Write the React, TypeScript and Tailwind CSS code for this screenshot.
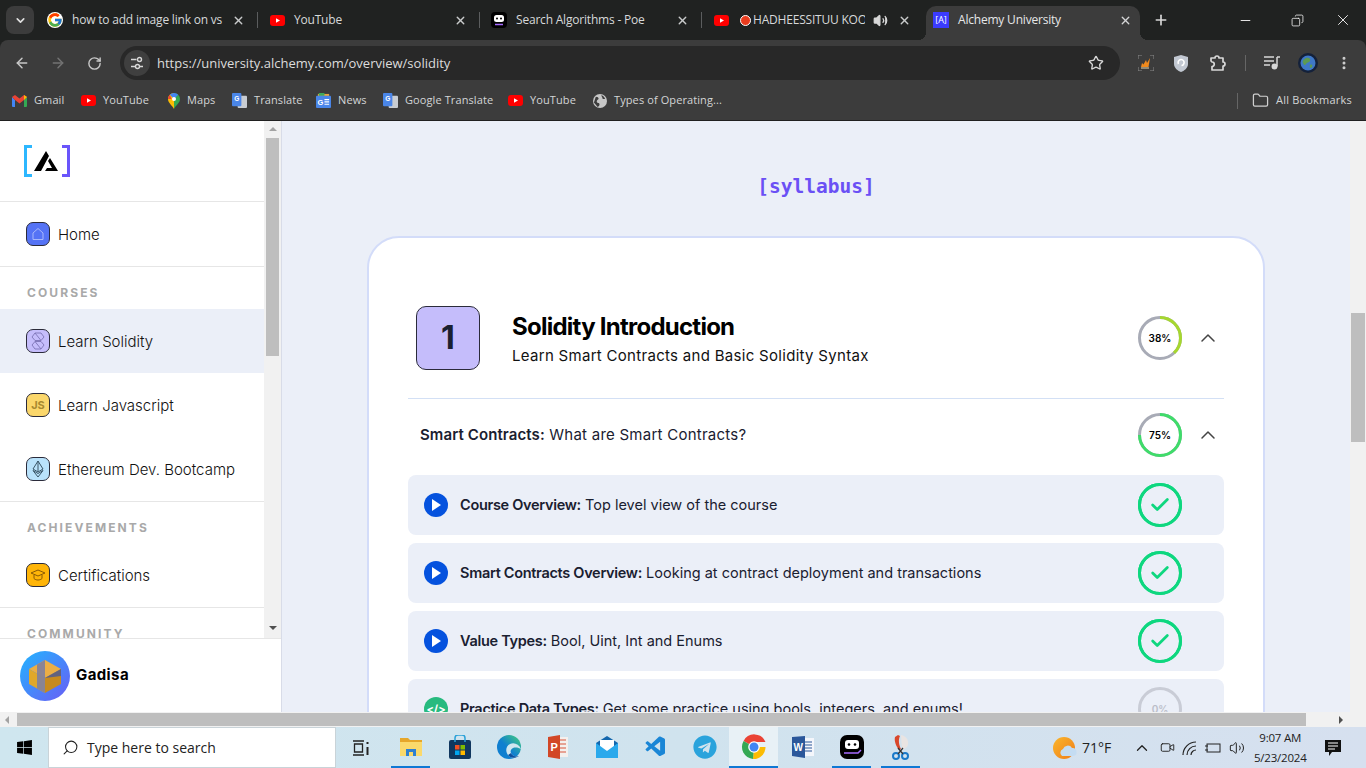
import type { ReactNode } from "react";
import {
  ArrowLeft,
  ArrowRight,
  Check,
  ChevronDown,
  ChevronUp,
  Copy,
  Folder,
  Minus,
  MoreVertical,
  Plus,
  RotateCw,
  Search,
  Star,
  Video,
  Volume2,
  X,
} from "lucide-react";
import { FcGoogle } from "react-icons/fc";
import { FaTelegram, FaWindows } from "react-icons/fa";
import { VscVscode } from "react-icons/vsc";

const Yt = () => (
  <svg width="15" height="15" viewBox="0 0 15 15" className="shrink-0">
    <rect x="0" y="2" width="15" height="11" rx="3" fill="#f00" />
    <path d="M6 5.200 10 7.500 6 9.800z" fill="#fff" />
  </svg>
);

const Poe = () => (
  <svg width="16" height="16" viewBox="0 0 16 16" className="shrink-0">
    <rect width="16" height="16" rx="4" fill="#000" />
    <rect x="3" y="3" width="10" height="7" rx="2.500" fill="#fff" />
    <circle cx="6" cy="6.500" r="1" fill="#000" />
    <circle cx="10" cy="6.500" r="1" fill="#000" />
    <path d="M4 12.500h8" stroke="#a66bff" strokeWidth="1.500" />
  </svg>
);

const GTranslate = () => (
  <svg width="15" height="15" viewBox="0 0 16 16" className="shrink-0">
    <rect x="6" y="3" width="10" height="13" rx="1" fill="#c8ccd2" />
    <rect x="0" y="0" width="10" height="14" rx="1" fill="#4a86e8" />
    <text x="2.500" y="9" fontSize="7" fontWeight="700" fill="#fff" fontFamily="Liberation Sans, sans-serif">G</text>
  </svg>
);

const News = () => (
  <svg width="15" height="15" viewBox="0 0 16 16" className="shrink-0">
    <path d="M2 1h12v4H2z" fill="#e8a33a" />
    <path d="M3 0h6v3H3z" fill="#3fa857" />
    <rect x="0" y="3" width="16" height="13" rx="1" fill="#4a86e8" />
    <text x="1.500" y="12.500" fontSize="8" fontWeight="700" fill="#fff" fontFamily="Liberation Sans, sans-serif">G</text>
    <path d="M9 7h5M9 9.500h5M9 12h5" stroke="#fff" strokeWidth="1.200" />
  </svg>
);

const Gmail = () => (
  <svg width="15" height="12" viewBox="0 0 15 12" className="shrink-0">
    <path d="M0 2v9a1 1 0 0 0 1 1h2V5z" fill="#4285f4" />
    <path d="M15 2v9a1 1 0 0 1-1 1h-2V5z" fill="#34a853" />
    <path d="M0 2 3 0l4.500 3.500L12 0l3 2-3 3-4.500 3.500L3 5z" fill="#ea4335" />
    <path d="M12 0l3 2-3 3z" fill="#fbbc04" />
  </svg>
);

const Maps = () => (
  <svg width="12" height="16" viewBox="0 0 12 16" className="shrink-0">
    <path d="M6 0a6 6 0 0 0-6 6c0 4 4 6 6 10z" fill="#fbbc04" />
    <path d="M6 0a6 6 0 0 1 6 6c0 4-4 6-6 10z" fill="#34a853" />
    <path d="M1.800 1.800 6 6l4.200-4.200A6 6 0 0 0 6 0a6 6 0 0 0-4.200 1.800z" fill="#4285f4" />
    <path d="M1.800 1.800A6 6 0 0 0 0 6l3.500 0z" fill="#ea4335" />
    <circle cx="6" cy="6" r="2" fill="#fff" />
  </svg>
);

const Globe = () => (
  <svg width="14" height="14" viewBox="0 0 15 15" className="shrink-0">
    <circle cx="7.500" cy="7.500" r="7.500" fill="#c7c7c7" />
    <path d="M3 3c2 0 3 1 3 2s-2 1-2 3 3 1 3 3-1 2-2 3L1 9zM9 1c2 1 3 2 4 4-2 1-3 0-3-1s-1-1-1-3z" fill="#3c3c3c" />
  </svg>
);

const ChromeLogo = ({ size = 26 }: { size?: number }) => (
  <svg width={size} height={size} viewBox="0 0 26 26">
    <path d="M13 13 2.600 7A12 12 0 0 1 24.500 8H13z" fill="#ea4335" />
    <path d="M13 13H24.500A12 12 0 0 1 12 25z" fill="#fbbc04" />
    <path d="M13 13 12 25A12 12 0 0 1 2.600 7z" fill="#34a853" />
    <circle cx="13" cy="13" r="5.800" fill="#fff" />
    <circle cx="13" cy="13" r="4.500" fill="#4285f4" />
  </svg>
);

const Tab = ({ icon, title }: { icon: ReactNode; title: string }) => (
  <div className="flex h-[40px] w-[222px] shrink-0 items-center">
    <div className="flex w-[30px] justify-end pr-[3px]">{icon}</div>
    <span className="min-w-0 flex-1 overflow-hidden pl-[6px] text-[12px] tracking-[-0.2px] whitespace-nowrap text-[#d7d9da]">{title}</span>
    <X size={13} strokeWidth={2.500} className="mr-[12px] ml-[3px] shrink-0 text-[#c9cbcc]" />
    <div className="h-[16px] w-[1px] bg-[#5b5d5e]" />
  </div>
);

const Bookmark = ({ icon, label, w }: { icon: ReactNode; label: string; w: string }) => (
  <div className={`flex items-center gap-[7px] ${w}`}>
    {icon}
    <span className="text-[11px] tracking-[0.1px] whitespace-nowrap text-[#d3d5d6]">{label}</span>
  </div>
);

const BrowserChrome = () => (
  <div className="shrink-0 bg-[#202221] font-['Open_Sans',sans-serif]">
    <div className="flex h-[40px]">
      <div className="w-[36px] pt-[6px] pl-[6px]">
        <div className="flex h-[28px] w-[28px] items-center justify-center rounded-[8px] bg-[#3c3c3c]">
          <ChevronDown size={13} strokeWidth={3} className="text-[#e0e0e0]" />
        </div>
      </div>
      <Tab icon={<FcGoogle size={16} className="rounded-full bg-white" />} title="how to add image link on vs" />
      <Tab icon={<Yt />} title="YouTube" />
      <Tab icon={<Poe />} title="Search Algorithms - Poe" />
      <div className="flex h-[40px] w-[224px] shrink-0 items-center">
        <div className="flex w-[30px] justify-end pr-[3px]"><Yt /></div>
        <div className="ml-[8px] h-[11px] w-[11px] shrink-0 rounded-full border border-white bg-[#ea3c1e]" />
        <span className="ml-[2px] w-[112px] overflow-hidden text-[12px] tracking-[-0.2px] whitespace-nowrap text-[#d7d9da]">HADHEESSITUU KOOMEE</span>
        <Volume2 size={15} className="ml-[8px] shrink-0 text-[#d8d8d8]" fill="#d8d8d8" />
        <X size={13} strokeWidth={2.500} className="ml-[10px] shrink-0 text-[#c9cbcc]" />
      </div>
      <div className="relative mt-[6px] flex h-[34px] w-[214px] shrink-0 items-center rounded-t-[10px] bg-[#3c3c3c] pr-[8px] pb-[6px] pl-[7px]">
        <div className="absolute bottom-0 -left-[8px] h-[8px] w-[8px] bg-[radial-gradient(circle_at_0_0,transparent_8px,#3c3c3c_8px)]" />
        <div className="absolute -right-[8px] bottom-0 h-[8px] w-[8px] bg-[radial-gradient(circle_at_100%_0,transparent_8px,#3c3c3c_8px)]" />
        <div className="flex h-[16px] w-[16px] items-center justify-center bg-[#3b3bff] text-[9px] text-white">[A]</div>
        <span className="ml-[9px] flex-1 text-[12px] tracking-[-0.2px] text-[#e6e7e8]">Alchemy University</span>
        <X size={13} strokeWidth={2.500} className="text-[#d5d6d7]" />
      </div>
      <Plus size={16} strokeWidth={2.500} className="mt-[12px] ml-[13px] text-[#d8d8d8]" />
      <div className="ml-[69px] flex h-[40px] items-center">
        <Minus size={15} strokeWidth={1.500} className="text-[#f0f0f0]" />
        <Copy size={13} strokeWidth={1.500} className="ml-[38px] -scale-x-100 text-[#f0f0f0]" />
        <X size={18} strokeWidth={1.250} className="ml-[30px] text-[#f0f0f0]" />
      </div>
    </div>
    <div className="flex h-[44px] items-center rounded-t-[8px] bg-[#3c3c3c] pt-[2px]">
      <ArrowLeft size={16} strokeWidth={2.250} className="ml-[14px] text-[#c8c8c8]" />
      <ArrowRight size={16} strokeWidth={2.250} className="ml-[20px] text-[#737373]" />
      <RotateCw size={15} strokeWidth={2.250} className="ml-[21px] text-[#c8c8c8]" />
      <div className="ml-[18px] flex h-[34px] w-[1000px] items-center rounded-full bg-[#282828]">
        <div className="ml-[4px] flex h-[26px] w-[26px] items-center justify-center rounded-full bg-[#3f3f3f]">
          <svg width="14" height="14" viewBox="0 0 14 14" fill="none" stroke="#d8d8d8" strokeWidth="1.400">
            <path d="M1 3.500h5.500M10 10.500h3M1 10.500h4" />
            <circle cx="9.500" cy="3.500" r="2" />
            <circle cx="7.500" cy="10.500" r="2" />
          </svg>
        </div>
        <span className="mt-[1px] ml-[7px] flex-1 text-[13px] text-[#dcdcdc]">https://university.alchemy.com/overview/solidity</span>
        <Star size={16} strokeWidth={2} className="mr-[16px] text-[#d8d8d8]" />
      </div>
      <svg width="16" height="16" viewBox="0 0 16 16" fill="none" className="ml-[18px]">
        <path d="M0 4V0h4M12 0h4v4M16 12v4h-4M4 16H0v-4" stroke="#8a8a8a" />
        <path d="M3 12 4 8l1.500 1.500L8 5l1 3 3-5-1.500 9z" fill="#f08a1d" />
        <path d="M3 13h8" stroke="#e8d9b0" />
      </svg>
      <svg width="14" height="17" viewBox="0 0 14 17" className="ml-[20px]">
        <path d="M7 0 14 2v7c0 4-4 7-7 8-3-1-7-4-7-8V2z" fill="#c2c8d2" />
        <path d="M4.500 9a3 3 0 1 1 3 1.500" fill="none" stroke="#fff" strokeWidth="1.600" />
      </svg>
      <svg width="18" height="18" viewBox="0 0 18 18" fill="none" stroke="#d8d8d8" strokeWidth="1.700" strokeLinejoin="round" className="ml-[21px]">
        <path d="M2 4h4a2 2 0 0 1 4 0h4v4a2 2 0 0 1 0 4v4H3v-3.500a2 2 0 0 0 0-4.500L2 7z" />
      </svg>
      <div className="ml-[18px] h-[16px] w-[1px] bg-[#666]" />
      <svg width="16" height="14" viewBox="0 0 16 14" fill="none" stroke="#d8d8d8" strokeWidth="1.500" className="ml-[18px]">
        <path d="M0 1h10M0 5h10M0 9h6M13 1h3M13 1v9.500" />
        <circle cx="10.500" cy="10.500" r="2.200" fill="#d8d8d8" />
      </svg>
      <svg width="20" height="20" viewBox="0 0 20 20" className="ml-[18px]">
        <circle cx="10" cy="10" r="10" fill="#14213a" />
        <circle cx="10" cy="10" r="7.500" fill="#3f78c8" />
        <path d="M8 5c3-1 5 1 4 3s-3 1-4 3-2 1-3-1 1-4 3-5z" fill="#5d9a52" />
        <path d="M12 12c2-1 3 0 2 2s-3 1-2-2z" fill="#5d9a52" />
      </svg>
      <MoreVertical size={16} strokeWidth={2.500} className="ml-[18px] text-[#d0d0d0]" />
    </div>
    <div className="flex h-[37px] items-center border-b border-[#202020] bg-[#3c3c3c] pb-[3px] pl-[12px]">
      <Bookmark icon={<Gmail />} label="Gmail" w="w-[69px]" />
      <Bookmark icon={<Yt />} label="YouTube" w="w-[87px]" />
      <Bookmark icon={<Maps />} label="Maps" w="w-[64px]" />
      <Bookmark icon={<GTranslate />} label="Translate" w="w-[84px]" />
      <Bookmark icon={<News />} label="News" w="w-[67px]" />
      <Bookmark icon={<GTranslate />} label="Google Translate" w="w-[125px]" />
      <Bookmark icon={<Yt />} label="YouTube" w="w-[85px]" />
      <Bookmark icon={<Globe />} label="Types of Operating..." w="w-[644px]" />
      <div className="h-[16px] w-[1px] bg-[#666]" />
      <Folder size={17} strokeWidth={1.750} className="ml-[14px] text-[#d0d0d0]" />
      <span className="ml-[7px] text-[11px] tracking-[0.2px] whitespace-nowrap text-[#d3d5d6]">All Bookmarks</span>
    </div>
  </div>
);

const NavIcon = ({ color, children }: { color: string; children: ReactNode }) => (
  <div className={`flex h-[24px] w-[24px] shrink-0 items-center justify-center rounded-[7px] border border-[#2b2b3a] ${color}`}>
    {children}
  </div>
);

const NavItem = ({ icon, label, active }: { icon: ReactNode; label: string; active?: boolean }) => (
  <div className={`flex h-[64px] items-center gap-[8px] pl-[26px] ${active ? "bg-[#ebeff8]" : ""}`}>
    {icon}
    <span className="mt-[2px] text-[15px] font-light whitespace-nowrap text-[#111]">{label}</span>
  </div>
);

const NavLabel = ({ children }: { children: ReactNode }) => (
  <div className="pl-[27px] text-[12px] leading-[16px] font-bold tracking-[2.100px] text-[#a9a9a9]">{children}</div>
);

const Logo = () => (
  <svg width="46" height="32" viewBox="0 0 46 32">
    <path d="M8 1.500H1.500v29H8" fill="none" stroke="#2db7ff" strokeWidth="3" />
    <path d="M38 1.500h6.500v29H38" fill="none" stroke="#6a55fb" strokeWidth="3" />
    <path d="M22 6 25 11 17 26H10zM26 13 34 26H21l2-3h5l-4-7z" fill="#000" />
  </svg>
);

const Sidebar = () => (
  <div className="flex h-full w-[282px] shrink-0 flex-col border-r border-[#d8dce8] bg-white font-['Inter',sans-serif]">
    <div className="flex h-[517px] shrink-0 overflow-hidden">
      <div className="w-[264px] shrink-0">
        <div className="flex h-[81px] items-start border-b border-[#e6e6e6] pt-[24px] pl-[24px]">
          <Logo />
        </div>
        <div className="border-b border-[#e6e6e6]">
          <NavItem
            label="Home"
            icon={
              <NavIcon color="bg-[#5573f5]">
                <svg width="16" height="16" viewBox="0 0 16 16" fill="none" stroke="#a9b8fa">
                  <path d="M3 7 8 2.500 13 7v6.500H3z" />
                </svg>
              </NavIcon>
            }
          />
        </div>
        <div className="pt-[18px] pb-[8px]">
          <NavLabel>COURSES</NavLabel>
        </div>
        <NavItem
          active
          label="Learn Solidity"
          icon={
            <NavIcon color="bg-[#c5bdfb]">
              <svg width="16" height="18" viewBox="0 0 16 18" fill="none" stroke="#7d74b5" strokeWidth="0.900">
                <path d="M5 1h6l3 4-3 3.500H5L2 5zM5 9.500h6l3 3.500-3 4H5l-3-4zM5 1l6 7.500M5 9.500l6 7.500" />
              </svg>
            </NavIcon>
          }
        />
        <NavItem
          label="Learn Javascript"
          icon={
            <NavIcon color="bg-[#fbd76b]">
              <span className="text-[11px] leading-none font-bold text-[#a88a30]">JS</span>
            </NavIcon>
          }
        />
        <div className="border-b border-[#e6e6e6]">
          <NavItem
            label="Ethereum Dev. Bootcamp"
            icon={
              <NavIcon color="bg-[#b9e2fb]">
                <svg width="12" height="18" viewBox="0 0 12 18" fill="none" stroke="#3a5668">
                  <path d="M6 1 11 9 6 12 1 9zM1 10.500 6 17l5-6.500L6 13.500zM6 1v11" />
                </svg>
              </NavIcon>
            }
          />
        </div>
        <div className="pt-[18px] pb-[7px]">
          <NavLabel>ACHIEVEMENTS</NavLabel>
        </div>
        <div className="border-b border-[#e6e6e6]">
          <NavItem
            label="Certifications"
            icon={
              <NavIcon color="bg-[#ffb508]">
                <svg width="16" height="14" viewBox="0 0 16 14" fill="none" stroke="#8a5a05">
                  <path d="M1 5 8 2l7 3-7 3zM4 7v3.500c2 2 6 2 8 0V7" />
                </svg>
              </NavIcon>
            }
          />
        </div>
        <div className="pt-[18px]">
          <NavLabel>COMMUNITY</NavLabel>
        </div>
      </div>
      <div className="flex w-[17px] flex-col items-center bg-[#f1f1f1]">
        <div className="mt-[6px] h-0 w-0 border-x-[4px] border-b-[4px] border-x-transparent border-b-[#a3a3a3]" />
        <div className="mt-[7px] h-[218px] w-[13px] bg-[#bebebe]" />
        <div className="mt-[270px] h-0 w-0 border-x-[4px] border-t-[4px] border-x-transparent border-t-[#505050]" />
      </div>
    </div>
    <div className="flex flex-1 items-center gap-[6px] border-t border-[#e6e6e6] pl-[20px]">
      <svg width="50" height="50" viewBox="0 0 50 50">
        <defs>
          <linearGradient id="av" x1="0" x2="1" y1="0" y2="1">
            <stop offset="0" stopColor="#22b5ff" />
            <stop offset="1" stopColor="#6a5cf5" />
          </linearGradient>
        </defs>
        <circle cx="25" cy="25" r="25" fill="url(#av)" />
        <path d="M25 9 41 18 25 27 9 18z" fill="#ecae45" />
        <path d="M9 18 25 27V42L9 33z" fill="#e0a82b" />
        <path d="M25 27 41 18V33L25 42z" fill="#c78a1e" />
        <path d="M17 13.500 25 9V42L17 37.500z" fill="#7f7f9f" opacity="0.900" />
        <path d="M25 27 41 18v7L25 27z" fill="#62627e" />
      </svg>
      <span className="text-[15px] font-bold tracking-[0.4px] text-black">Gadisa</span>
    </div>
  </div>
);

interface RingProps {
  pct: number;
  color: string;
  track?: string;
  children: ReactNode;
}

const Ring = ({ pct, color, track = "#a8abb6", children }: RingProps) => (
  <div className="relative h-[44px] w-[44px] shrink-0">
    <svg width="44" height="44" viewBox="0 0 44 44" className="-rotate-90">
      <circle cx="22" cy="22" r="20.500" fill="none" stroke={track} strokeWidth="3" />
      <circle
        cx="22"
        cy="22"
        r="20.500"
        fill="none"
        stroke={color}
        strokeWidth="3"
        pathLength={100}
        strokeDasharray={`${pct} 100`}
      />
    </svg>
    <div className="absolute inset-0 flex items-center justify-center text-[10px] font-semibold text-black">{children}</div>
  </div>
);

const Done = () => (
  <Ring pct={100} color="#0ed77f" track="#0ed77f">
    <Check size={22} strokeWidth={3} className="text-[#0ed77f]" />
  </Ring>
);

const LessonRow = ({ title, text, icon, ring }: { title: string; text: string; icon?: ReactNode; ring: ReactNode }) => (
  <div className="flex h-[60px] shrink-0 items-center rounded-[8px] bg-[#ebeff8] pr-[42px] pl-[16px]">
    {icon ?? (
      <div className="flex h-[24px] w-[24px] items-center justify-center rounded-full bg-[#0552de]">
        <svg width="10" height="12" viewBox="0 0 10 12"><path d="M1 0 10 6 1 12z" fill="#fff" /></svg>
      </div>
    )}
    <div className="ml-[12px] flex-1 text-[14.500px] whitespace-nowrap text-[#1a2030]">
      <span className="font-semibold tracking-[-0.3px]">{title}</span> {text}
    </div>
    {ring}
  </div>
);

const Main = () => (
  <div className="flex min-w-0 flex-1 flex-col items-center overflow-hidden bg-[#ebeff8] font-['Inter',sans-serif]">
    <div className="mt-[51px] font-['DejaVu_Sans_Mono',monospace] text-[19.500px] leading-[30px] font-bold text-[#6a50f5]">[syllabus]</div>
    <div className="mt-[34px] w-[898px] shrink-0 rounded-[32px] border-2 border-[#d3dcf9] bg-white px-[39px] pt-[68px] pb-[40px]">
      <div className="flex h-[93px] items-start border-b border-[#d3e0f5] pl-[8px]">
        <div className="flex h-[64px] w-[64px] items-center justify-center rounded-[10px] border border-[#2b2b3a] bg-[#c5bdfb] text-[32px] font-bold text-[#1a2030]">
          1
        </div>
        <div className="ml-[32px] flex-1 pt-[5px]">
          <div className="text-[24px] leading-[32px] font-bold tracking-[-0.75px] text-black">Solidity Introduction</div>
          <div className="mt-[2px] text-[15px] leading-[22px] tracking-[0.3px] text-[#111]">Learn Smart Contracts and Basic Solidity Syntax</div>
        </div>
        <div className="mt-[10px] flex items-center pr-[4px]">
          <Ring pct={38} color="#a6d72f">38%</Ring>
          <ChevronUp size={24} strokeWidth={1.500} className="ml-[14px] text-[#444]" />
        </div>
      </div>
      <div className="flex h-[76px] items-center pr-[4px] pb-[4px] pl-[12px]">
        <div className="flex-1 text-[15px] tracking-[0.25px] text-[#1a2030]">
          <span className="font-semibold tracking-[0.1px]">Smart Contracts:</span> What are Smart Contracts?
        </div>
        <Ring pct={75} color="#3fdc6a">75%</Ring>
        <ChevronUp size={24} strokeWidth={1.500} className="ml-[14px] text-[#444]" />
      </div>
      <div className="flex flex-col gap-[8px]">
        <LessonRow title="Course Overview:" text="Top level view of the course" ring={<Done />} />
        <LessonRow title="Smart Contracts Overview:" text="Looking at contract deployment and transactions" ring={<Done />} />
        <LessonRow title="Value Types:" text="Bool, Uint, Int and Enums" ring={<Done />} />
        <LessonRow
          title="Practice Data Types:"
          text="Get some practice using bools, integers, and enums!"
          icon={
            <div className="flex h-[24px] w-[24px] items-center justify-center rounded-full bg-[#27ba7f] text-[11px] font-bold text-white">
              {"</>"}
            </div>
          }
          ring={
            <div className="opacity-50">
              <Ring pct={0} color="#a8abb6"><span className="text-[#8a8d98]">0%</span></Ring>
            </div>
          }
        />
      </div>
    </div>
  </div>
);

const Slot = ({ children, bar, active }: { children: ReactNode; bar?: boolean; active?: boolean }) => (
  <div className={`flex h-[41px] w-[49px] shrink-0 flex-col ${active ? "bg-[#e8f1f6]" : ""}`}>
    <div className="flex flex-1 items-center justify-center">{children}</div>
    <div className={`h-[2px] ${bar ? "mx-[5px] bg-[#0f78d4]" : ""} ${active ? "mx-0 bg-[#0f78d4]" : ""}`} />
  </div>
);

const Taskbar = () => (
  <div className="flex h-[41px] shrink-0 items-center bg-[linear-gradient(90deg,#cfe6ef,#d0e3ee_50%,#d6e0ef)] font-['Open_Sans',sans-serif]">
    <div className="flex w-[48px] justify-center"><FaWindows size={17} className="text-black" /></div>
    <div className="flex h-[41px] w-[288px] items-center border border-[#c9d3d8] bg-white pl-[13px]">
      <Search size={17} strokeWidth={1.500} className="-scale-x-100 text-[#222]" />
      <span className="ml-[8px] text-[14px] text-[#222]">Type here to search</span>
    </div>
    <div className="flex w-[50px] justify-center">
      <svg width="18" height="16" viewBox="0 0 18 16" fill="none" stroke="#222" strokeWidth="1.300">
        <path d="M1 1h11M2.500 4h8v8h-8zM1 15h11" />
        <path d="M15.500 2v2M15.500 7v8" strokeWidth="2" />
      </svg>
    </div>
    <Slot bar>
      <svg width="22" height="20" viewBox="0 0 22 20">
        <path d="M0 1h8l2 2h12v15H0z" fill="#e6a72a" />
        <path d="M0 5h22v14H0z" fill="#fbd96b" />
        <path d="M6 12h10v7H6z" fill="#2f80d0" />
        <path d="M9 15h4v4H9z" fill="#fbd96b" />
      </svg>
    </Slot>
    <Slot>
      <svg width="22" height="24" viewBox="0 0 22 24">
        <rect y="5" width="22" height="19" rx="2" fill="#10375f" />
        <path d="M6 7V3a3 3 0 0 1 3-3h4a3 3 0 0 1 3 3v4" fill="none" stroke="#2aa1d8" strokeWidth="1.500" />
        <path d="M6 10h4.500v4.500H6z" fill="#f25022" />
        <path d="M11.500 10H16v4.500h-4.500z" fill="#7fba00" />
        <path d="M6 15.500h4.500V20H6z" fill="#00a4ef" />
        <path d="M11.500 15.500H16V20h-4.500z" fill="#ffb900" />
      </svg>
    </Slot>
    <Slot>
      <svg width="24" height="26" viewBox="0 0 24 26">
        <defs>
          <linearGradient id="edge" x1="0" x2="1" y1="1" y2="0">
            <stop offset="0.450" stopColor="#0f7fd0" />
            <stop offset="1" stopColor="#45d17a" />
          </linearGradient>
        </defs>
        <circle cx="12" cy="13" r="12" fill="url(#edge)" />
        <path d="M24 15c-2-5-7-7-11-5-4 2-5 7-2 11 2 3 7 4 11 1-3 1-7 0-8-3-1-2 0-4 2-5 3-1 6 0 8 1z" fill="#cfe6ef" />
        <path d="M11 21c2 3 7 4 11 1-3 1-7 0-8-3z" fill="#0b4f9e" />
      </svg>
    </Slot>
    <Slot>
      <svg width="20" height="24" viewBox="0 0 20 24">
        <rect x="6" y="2" width="14" height="20" fill="#f4f0ee" />
        <path d="M12 5h6M12 9h6M12 13h6M12 17h6" stroke="#d8553a" strokeWidth="1.200" />
        <path d="M0 2 12 0V24L0 22z" fill="#d24726" />
        <text x="2.500" y="16" fontSize="11" fontWeight="700" fill="#fff" fontFamily="Liberation Sans, sans-serif">P</text>
      </svg>
    </Slot>
    <Slot>
      <svg width="24" height="24" viewBox="0 0 24 24">
        <path d="M1 8 12 1l11 7v15H1z" fill="#1467ad" />
        <path d="M5 5h14v11H5z" fill="#fff" />
        <path d="M1 8 12 16 23 8v15H1z" fill="#2aa9ec" />
      </svg>
    </Slot>
    <Slot>
      <VscVscode size={24} className="text-[#1a86d6]" />
    </Slot>
    <Slot>
      <FaTelegram size={24} className="text-[#2aa3dc]" />
    </Slot>
    <Slot active>
      <ChromeLogo />
    </Slot>
    <Slot>
      <svg width="22" height="22" viewBox="0 0 22 22">
        <rect x="6" y="2" width="16" height="18" fill="#f4f6fb" />
        <path d="M13 6h7M13 9h7M13 12h7M13 15h7" stroke="#2b579a" strokeWidth="1.200" />
        <path d="M0 1 13 0V22L0 20z" fill="#2b579a" />
        <text x="1.500" y="15" fontSize="10" fontWeight="700" fill="#fff" fontFamily="Liberation Sans, sans-serif">W</text>
      </svg>
    </Slot>
    <Slot bar>
      <svg width="26" height="24" viewBox="0 0 26 24">
        <rect x="1" width="24" height="24" rx="7" fill="#000" />
        <rect x="6" y="5" width="14" height="9" rx="3" fill="#fff" />
        <circle cx="10" cy="9.500" r="1.300" fill="#000" />
        <circle cx="16" cy="9.500" r="1.300" fill="#000" />
        <path d="M5 18h14l3-3" fill="none" stroke="#a66bff" strokeWidth="1.500" />
      </svg>
    </Slot>
    <Slot bar>
      <svg width="18" height="26" viewBox="0 0 18 26">
        <path d="M9 1a8 8 0 0 1 6 12l-5 3z" fill="#e9e4e2" />
        <path d="M6 1 3 3c-1 4 1 9 4 13l2-1C7 11 6 6 8 2z" fill="#d9472b" />
        <circle cx="4" cy="22" r="3" fill="none" stroke="#1979c9" strokeWidth="2" />
        <circle cx="13" cy="22" r="3" fill="none" stroke="#1979c9" strokeWidth="2" />
        <path d="M6 20 11 14M11 20 6 14" stroke="#333" strokeWidth="1.200" />
      </svg>
    </Slot>
    <div className="ml-[128px] flex items-center">
      <svg width="24" height="26" viewBox="0 0 24 26">
        <defs>
          <linearGradient id="sun" x1="0" x2="1" y1="0" y2="1">
            <stop offset="0" stopColor="#fbb62b" />
            <stop offset="1" stopColor="#ef7d1a" />
          </linearGradient>
        </defs>
        <circle cx="11" cy="13" r="11" fill="url(#sun)" />
        <path d="M9 21a4 4 0 0 1 1-7 5 5 0 0 1 9-1 4 4 0 0 1 1 8z" fill="#c4dcf2" />
      </svg>
      <span className="ml-[5px] text-[14px] text-[#222]">71°F</span>
    </div>
    <ChevronUp size={18} strokeWidth={1.750} className="ml-[22px] text-[#222]" />
    <Video size={15} strokeWidth={1.500} className="ml-[9px] text-[#222]" />
    <svg width="16" height="16" viewBox="0 0 16 16" fill="none" stroke="#222" strokeWidth="1.200" className="ml-[7px]">
      <path d="M1 15A13 13 0 0 1 14 2M5 15a9 9 0 0 1 9-9M9 15a5 5 0 0 1 5-5" />
    </svg>
    <svg width="17" height="12" viewBox="0 0 17 12" fill="none" stroke="#222" className="ml-[6px]">
      <rect x="3" y="2" width="13" height="8" />
      <path d="M1 4h3M1 8h3" />
    </svg>
    <Volume2 size={16} strokeWidth={1.500} className="ml-[8px] text-[#222]" />
    <div className="ml-[7px] flex w-[56px] flex-col items-center text-[11.500px] leading-[20px] tracking-[-0.2px] text-[#222]">
      <span>9:07 AM</span>
      <span>5/23/2024</span>
    </div>
    <svg width="16" height="16" viewBox="0 0 16 16" className="ml-[17px]">
      <path d="M0 0h16v12H7l-3 4v-4H0z" fill="#111" />
      <path d="M3 3h10M3 6h10M3 9h7" stroke="#fff" />
    </svg>
  </div>
);

const App = () => {
  return (
    <div className="flex h-[768px] w-[1366px] flex-col overflow-hidden bg-white">
      <BrowserChrome />
      <div className="flex h-[606px] shrink-0 flex-col">
        <div className="flex h-[591px] shrink-0">
          <Sidebar />
          <Main />
          <div className="w-[16px] shrink-0 bg-[#f1f1f1] pt-[192px]">
            <div className="mx-auto h-[129px] w-[14px] bg-[#bebebe]" />
          </div>
        </div>
        <div className="flex h-[15px] shrink-0 items-center bg-[#f1f1f1]">
          <div className="ml-[5px] h-0 w-0 border-y-[4px] border-r-[4px] border-y-transparent border-r-[#a3a3a3]" />
          <div className="ml-[8px] h-[13px] w-[1289px] bg-[#bebebe]" />
          <div className="ml-[33px] h-0 w-0 border-y-[4px] border-l-[4px] border-y-transparent border-l-[#505050]" />
        </div>
      </div>
      <Taskbar />
    </div>
  );
};

export default App;
